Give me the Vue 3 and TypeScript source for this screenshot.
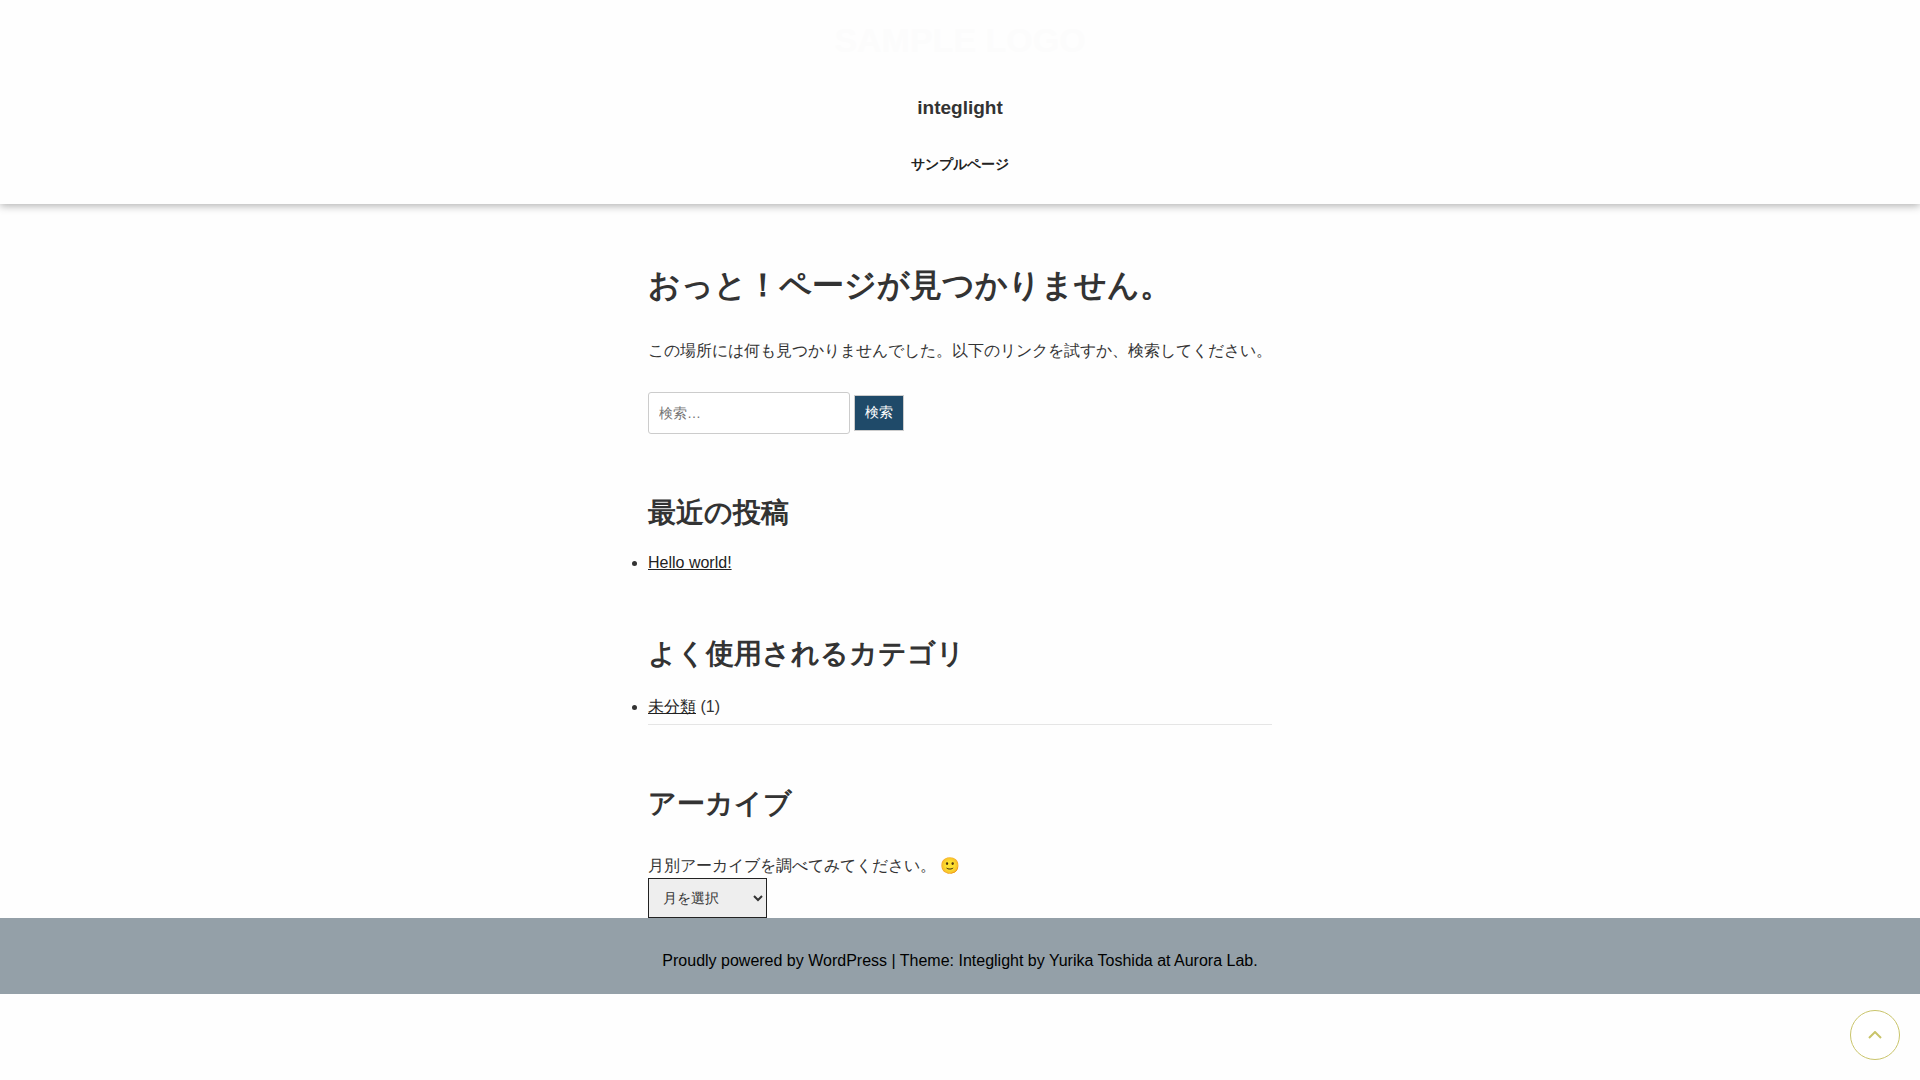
<script setup lang="ts">
import { ref } from 'vue'

const keyword = ref('')
const month = ref('')

function toTop(): void {
  window.scrollTo({ top: 0, behavior: 'smooth' })
}
</script>

<template>
  <div class="page">
    <header class="site-header">
      <a class="logo" href="#">SAMPLE LOGO</a>
      <a class="site-title" href="#">integlight</a>
      <nav class="menu">
        <a href="#">サンプルページ</a>
      </nav>
    </header>

    <main class="content">
      <h1>おっと！ページが見つかりません。</h1>
      <p class="lead">この場所には何も見つかりませんでした。以下のリンクを試すか、検索してください。</p>

      <form class="search" role="search" @submit.prevent>
        <input v-model="keyword" type="search" placeholder="検索…" aria-label="検索" />
        <button type="submit">検索</button>
      </form>

      <section class="widget">
        <h2>最近の投稿</h2>
        <ul>
          <li><a href="#">Hello world!</a></li>
        </ul>
      </section>

      <section class="widget">
        <h2>よく使用されるカテゴリ</h2>
        <ul class="categories">
          <li><a href="#">未分類</a> (1)</li>
        </ul>
      </section>

      <section class="widget">
        <h2>アーカイブ</h2>
        <p class="note">月別アーカイブを調べてみてください。 🙂</p>
        <select v-model="month" aria-label="アーカイブ">
          <option value="">月を選択</option>
        </select>
      </section>
    </main>

    <footer class="site-footer">
      <a href="#">Proudly powered by WordPress</a> | Theme: Integlight by
      <a href="#">Yurika Toshida at Aurora Lab.</a>
    </footer>

    <button class="to-top" type="button" aria-label="トップへ戻る" @click="toTop">
      <svg viewBox="0 0 14 8" width="14" height="8">
        <path d="M1 7l6-6 6 6" fill="none" stroke="currentColor" stroke-width="2" />
      </svg>
    </button>
  </div>
</template>

<style>
body {
  margin: 0;
  background: #fefefe;
}
</style>

<style scoped>
.page,
.page input,
.page select,
.page button {
  font-family: "Liberation Sans", sans-serif;
}

.page {
  color: #333;
  font-size: 16px;
  line-height: 24px;
}

.page * {
  box-sizing: border-box;
}

.site-header {
  display: flex;
  flex-direction: column;
  align-items: center;
  padding: 20px 16px 28px;
  background: #fefefe;
  box-shadow: 0 2px 8px rgba(0, 0, 0, 0.3);
}

.logo {
  color: #fcfcfc;
  font-size: 34px;
  font-weight: 700;
  line-height: 40px;
  text-decoration: none;
}

.site-title {
  margin-top: 33px;
  color: #333;
  font-size: 19px;
  font-weight: 700;
  line-height: 30px;
  text-decoration: none;
}

.menu {
  margin-top: 29px;
}

.menu a {
  display: block;
  color: #222;
  font-size: 14px;
  font-weight: 700;
  line-height: 24px;
  text-decoration: none;
}

.content {
  width: fit-content;
  margin: 0 auto;
}

h1 {
  margin: 0;
  padding-top: 56px;
  font-size: 32px;
  line-height: 50px;
}

h2 {
  margin: 0;
  font-size: 28px;
  line-height: 42px;
}

.lead {
  margin: 29px 0;
}

.search {
  display: flex;
  align-items: center;
  gap: 4px;
}

.search input {
  width: 202px;
  height: 42px;
  padding: 0 10px;
  border: 1px solid #ccc;
  border-radius: 3px;
  background: #fff;
  color: #666;
  font-size: 14px;
}

.search button {
  height: 36px;
  padding: 0 10px;
  border: 1px solid #ccc;
  background: #1f4a69;
  color: #fff;
  font-size: 14px;
}

.widget {
  padding-top: 58px;
}

ul {
  margin: 17px 0 0;
  padding: 0;
}

li {
  color: #333;
}

li a {
  color: #222;
}

.categories {
  margin-top: 20px;
}

.categories li {
  padding-bottom: 5px;
  border-bottom: 1px solid #e5e5e5;
}

.note {
  margin: 29px 0 0;
}

select {
  display: block;
  width: 119px;
  height: 40px;
  padding: 0 10px;
  border: 1px solid #222;
  border-radius: 0;
  background: #eee;
  color: #333;
  font-size: 14px;
}

.site-footer {
  padding: 31px 16px 21px;
  background: #94a0a8;
  color: #000;
  text-align: center;
}

.site-footer a {
  color: #000;
  text-decoration: none;
}

.to-top {
  position: fixed;
  right: 20px;
  bottom: 20px;
  display: flex;
  align-items: center;
  justify-content: center;
  width: 50px;
  height: 50px;
  padding: 0;
  border: 1px solid #c9c46a;
  border-radius: 50%;
  background: #fff;
  color: #c9c46a;
}
</style>
